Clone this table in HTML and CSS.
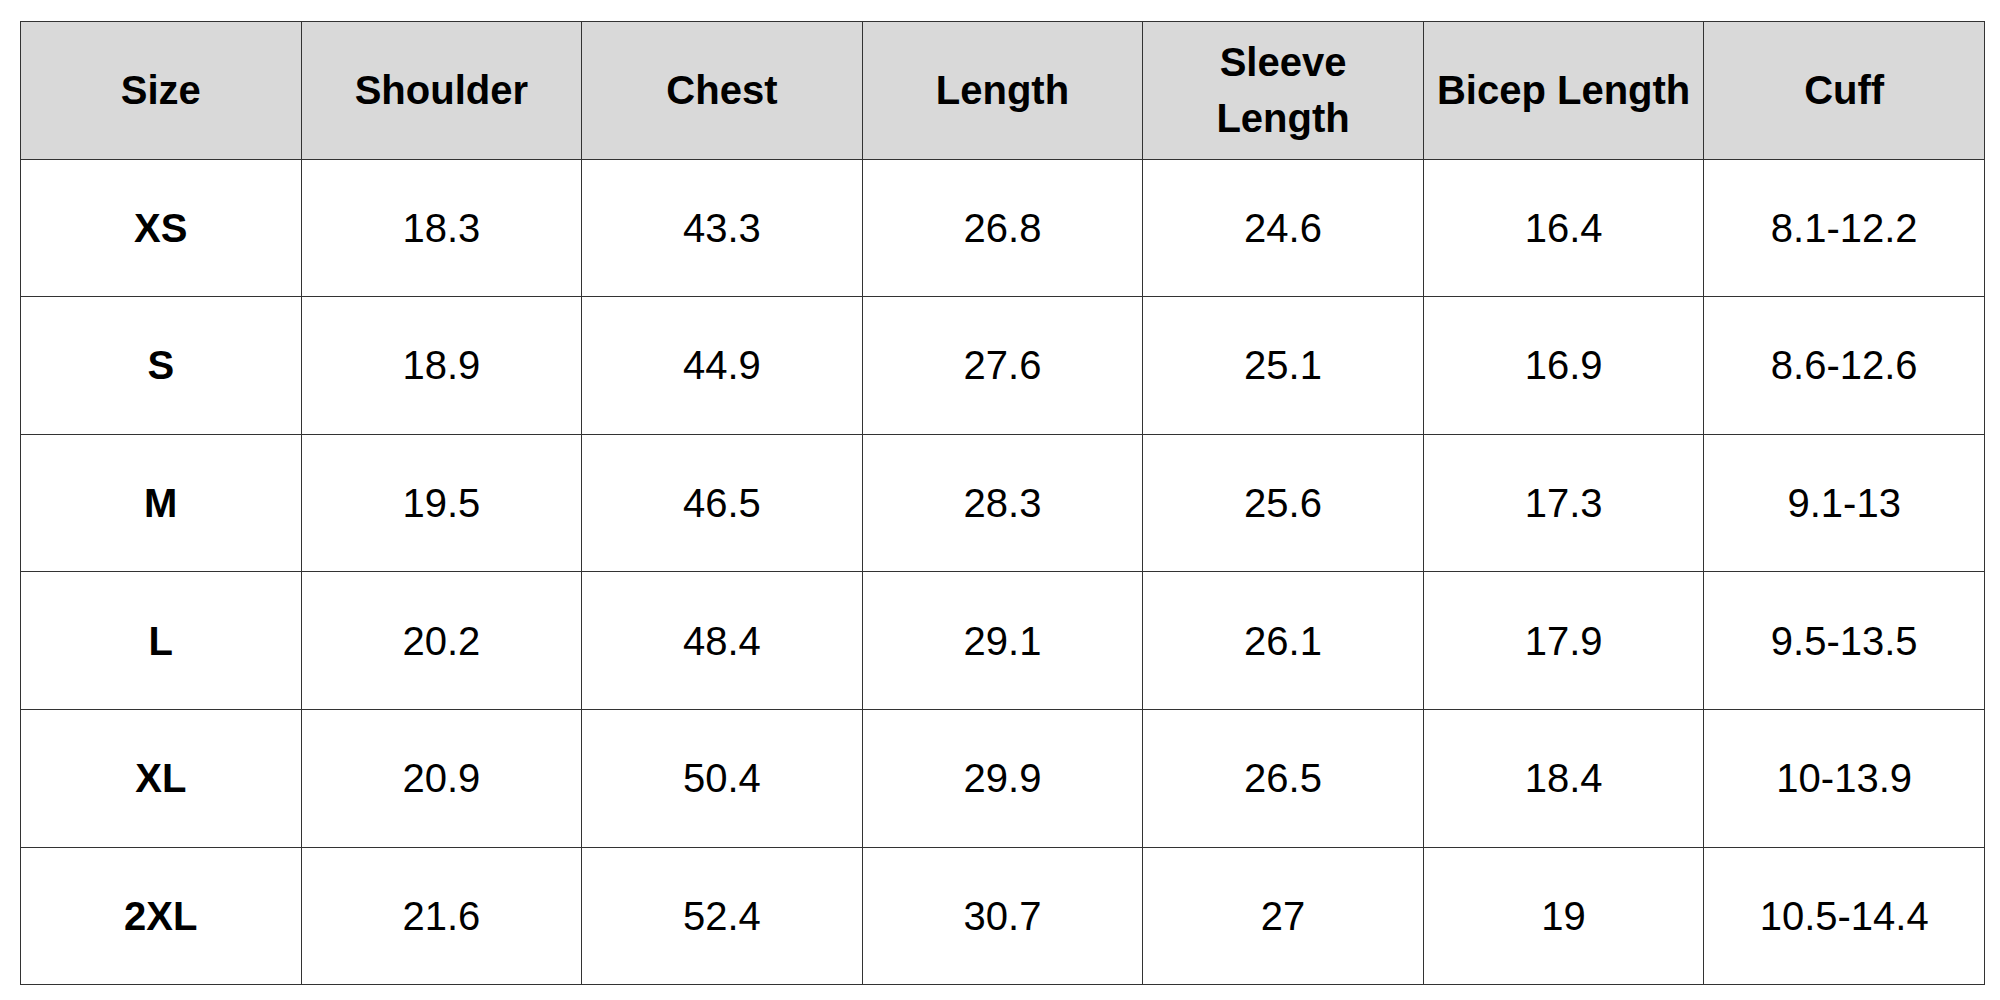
FILE: index.html
```html
<!DOCTYPE html>
<html>
<head>
<meta charset="utf-8">
<link rel="stylesheet" href="styles.css">
</head>
<body>
<table class="size-table">
  <thead>
    <tr>
      <th>Size</th><th>Shoulder</th><th>Chest</th><th>Length</th><th>Sleeve<br>Length</th><th>Bicep Length</th><th>Cuff</th>
    </tr>
  </thead>
  <tbody>
    <tr><td class="size">XS</td><td>18.3</td><td>43.3</td><td>26.8</td><td>24.6</td><td>16.4</td><td>8.1-12.2</td></tr>
    <tr><td class="size">S</td><td>18.9</td><td>44.9</td><td>27.6</td><td>25.1</td><td>16.9</td><td>8.6-12.6</td></tr>
    <tr><td class="size">M</td><td>19.5</td><td>46.5</td><td>28.3</td><td>25.6</td><td>17.3</td><td>9.1-13</td></tr>
    <tr><td class="size">L</td><td>20.2</td><td>48.4</td><td>29.1</td><td>26.1</td><td>17.9</td><td>9.5-13.5</td></tr>
    <tr><td class="size">XL</td><td>20.9</td><td>50.4</td><td>29.9</td><td>26.5</td><td>18.4</td><td>10-13.9</td></tr>
    <tr><td class="size">2XL</td><td>21.6</td><td>52.4</td><td>30.7</td><td>27</td><td>19</td><td>10.5-14.4</td></tr>
  </tbody>
</table>
</body>
</html>
```
FILE: styles.css
```css
html, body {
  margin: 0;
  padding: 0;
  background: #ffffff;
}

body {
  padding: 21px 0 0 20px;
  font-family: "Liberation Sans", Arial, sans-serif;
  color: #000000;
}

.size-table {
  border-collapse: collapse;
  table-layout: fixed;
  width: 1965px;
  border: 1px solid #444444;
}

.size-table th,
.size-table td {
  border: 1px solid #333333;
  text-align: center;
  vertical-align: middle;
  padding: 0;
  font-size: 40px;
  line-height: 56px;
  height: 136.6px;
}

.size-table th {
  background: #d9d9d9;
  font-weight: bold;
}

.size-table td {
  font-weight: normal;
}

.size-table td.size {
  font-weight: bold;
}
```
